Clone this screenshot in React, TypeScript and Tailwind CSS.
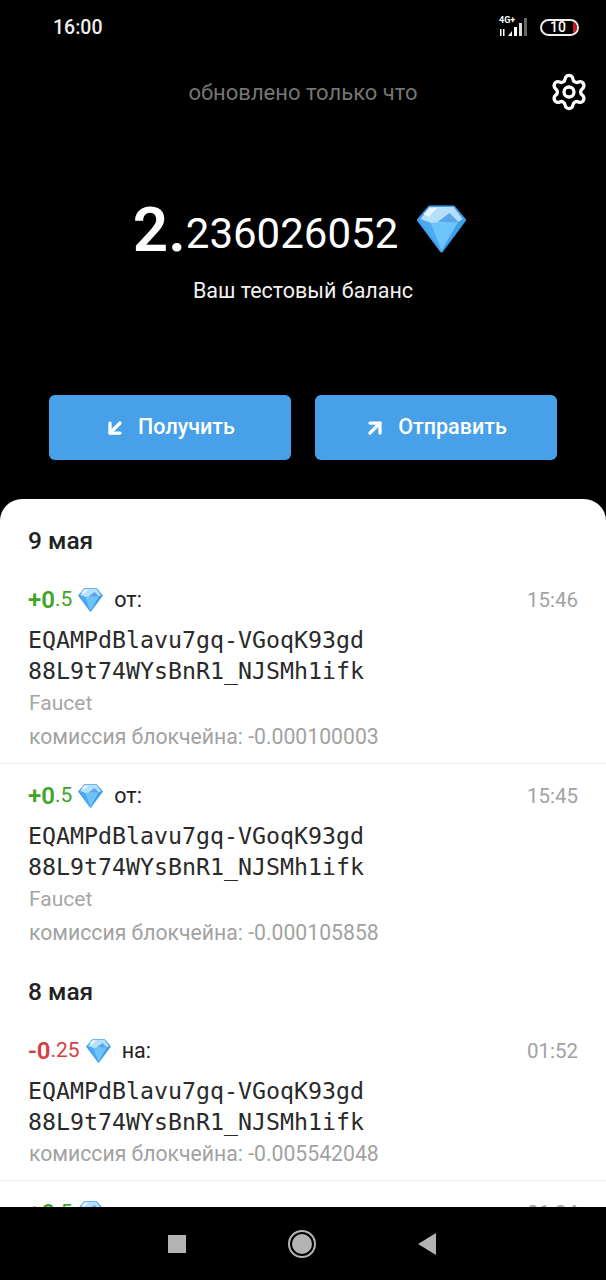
import { ArrowDownLeft, ArrowUpRight, Settings } from 'lucide-react'

const address = ['EQAMPdBlavu7gq-VGoqK93gd', '88L9t74WYsBnR1_NJSMh1ifk']

function Diamond({ className }: { className: string }) {
  return (
    <svg viewBox="0 0 50 48" className={className}>
      <polygon points="13,2 37,2 48,15 25,46 2,15" fill="#3f9ff0" stroke="#3f9ff0" strokeWidth="3" strokeLinejoin="round" />
      <polygon points="13,2 37,2 46,14 42,17 14,18 4,14" fill="#b5dffa" />
      <polygon points="14,18 42,17 25,46" fill="#6cc4fa" />
      <polygon points="3,15 14,18 25,46" fill="#4baaf0" />
      <polygon points="42,17 47,15 25,46" fill="#3f9ae8" />
      <polygon points="21,17 33,8 42,17" fill="#5aa6e4" />
      <polygon points="7,9 13,3 21,3 12,12" fill="#e6f5ff" />
    </svg>
  )
}

function Transaction({ sign, fraction, color, label, time, source, fee, divider }: {
  sign: string
  fraction: string
  color: string
  label: string
  time: string
  source?: string
  fee: string
  divider?: boolean
}) {
  return (
    <div className={divider ? 'pl-[29px] pt-[15px] border-b border-[#eeeeee]' : 'pl-[29px] pt-[15px]'}>
      <div className="flex h-[34px] items-center pr-[28px]">
        <span className={`${color} -ml-px text-[24px] font-semibold`}>{sign}0</span>
        <span className={`${color} text-[21px]`}>{fraction}</span>
        <Diamond className="ml-[6px] h-[24px] w-[25px]" />
        <span className="ml-[11px] text-[21.5px] text-[#222222]">{label}</span>
        <span className="ml-auto text-[20.5px] text-[#a2a2a2]">{time}</span>
      </div>
      <div className="-ml-px mt-[7px] font-['DejaVu_Sans_Mono',monospace] text-[23.25px] leading-[31px] text-[#2a2a2a]">
        {address.map((line) => (
          <div key={line}>{line}</div>
        ))}
      </div>
      {source && <div className="mt-[1px] h-[32px] text-[21px] leading-[32px] text-[#a6a6a6]">{source}</div>}
      {source ? (
        <div className="h-[35px] text-[21.2px] leading-[35px] text-[#a2a2a2]">{fee}</div>
      ) : (
        <div className="mt-[1px] h-[31px] text-[21.2px] leading-[31px] text-[#a2a2a2]">{fee}</div>
      )}
      <div className={source ? 'h-[9px]' : 'h-[11px]'} />
    </div>
  )
}

export default function App() {
  return (
    <div className="flex h-[1280px] w-[606px] flex-col overflow-hidden bg-black font-['Roboto',sans-serif]">
      {/* Status bar */}
      <div className="flex h-[54px] shrink-0 items-center pl-[53px] pr-[27px]">
        <span className="mt-[1px] text-[19.5px] font-medium text-[#eeeeee]">16:00</span>
        <div className="ml-auto flex items-center">
          <div className="relative h-[22px] w-[32px]">
            <span className="absolute left-0 top-[-1px] text-[9px] font-bold leading-[11px] text-white">4G+</span>
            <svg viewBox="0 0 32 22" className="h-[22px] w-[32px]">
              <rect x="1" y="13" width="1.5" height="7" fill="#fff" />
              <rect x="4" y="13" width="1.5" height="7" fill="#fff" />
              <polygon points="9,20 13,20 13,15" fill="#fff" />
              <rect x="15" y="11" width="3" height="9" fill="#fff" />
              <rect x="20" y="7" width="3" height="13" fill="#ddd" />
              <rect x="25" y="2" width="3" height="18" fill="#666" />
            </svg>
          </div>
          <div className="relative ml-[9px] flex h-[17px] w-[39px] items-center justify-center overflow-hidden rounded-full border-2 border-[#eeeeee] pr-[3px]">
            <span className="text-[14px] font-medium leading-none text-white">10</span>
            <span className="absolute right-0 top-[1px] h-[11px] w-[4px] rounded-r-full bg-[#c81818]" />
          </div>
        </div>
      </div>

      {/* Header */}
      <div className="grid h-[76px] shrink-0 grid-cols-[1fr_auto_1fr] items-center">
        <div />
        <span className="mt-[1px] text-[22px] text-[#757575]">обновлено только что</span>
        <Settings className="ml-auto mr-[17px] h-[40px] w-[40px] text-white" strokeWidth={2} />
      </div>

      {/* Balance */}
      <div className="mt-[59px] flex h-[80px] shrink-0 items-center justify-center pr-[6px] text-white">
        <span className="text-[62px] font-semibold">2.</span>
        <span className="mt-[9px] text-[42px]">236026052</span>
        <Diamond className="ml-[18px] h-[48px] w-[51px]" />
      </div>
      <div className="mt-[7px] text-center text-[21.5px] leading-[30px] text-[#f2f2f2]">Ваш тестовый баланс</div>

      {/* Actions */}
      <div className="mt-[89px] flex shrink-0 gap-[24px] px-[49px]">
        <div className="flex h-[65px] w-[242px] items-center justify-center gap-[11px] rounded-[6px] bg-[#47a0e8] pr-[2px] text-[21.5px] font-medium text-white">
          <ArrowDownLeft className="h-[24px] w-[24px]" strokeWidth={3.25} />
          Получить
        </div>
        <div className="flex h-[65px] w-[242px] items-center justify-center gap-[11px] rounded-[6px] bg-[#47a0e8] pr-[2px] text-[21.5px] font-medium text-white">
          <ArrowUpRight className="h-[24px] w-[24px]" strokeWidth={3.25} />
          Отправить
        </div>
      </div>

      {/* History */}
      <div className="mt-[39px] min-h-0 flex-1 overflow-hidden rounded-t-[22px] bg-white">
        <div className="h-[69px] pl-[28px] pt-[24px] text-[24.5px] font-medium leading-[36px] text-[#222222]">9 мая</div>
        <Transaction sign="+" fraction=".5" color="text-[#3fa52b]" label="от:" time="15:46" source="Faucet" fee="комиссия блокчейна: -0.000100003" divider />
        <Transaction sign="+" fraction=".5" color="text-[#3fa52b]" label="от:" time="15:45" source="Faucet" fee="комиссия блокчейна: -0.000105858" />
        <div className="h-[60px] pl-[28px] pt-[15px] text-[24.5px] font-medium leading-[36px] text-[#222222]">8 мая</div>
        <Transaction sign="-" fraction=".25" color="text-[#d2403f]" label="на:" time="01:52" fee="комиссия блокчейна: -0.005542048" divider />
        <Transaction sign="+" fraction=".5" color="text-[#3fa52b]" label="от:" time="01:34" fee="комиссия блокчейна: -0.000100003" />
      </div>

      {/* Navigation bar */}
      <div className="flex h-[73px] shrink-0 items-center justify-center gap-[102px] bg-black pr-[2px]">
        <div className="h-[18px] w-[18px] bg-[#b4b4b4]" />
        <div className="flex h-[28px] w-[28px] items-center justify-center rounded-full border-2 border-[#b4b4b4]">
          <div className="h-[20px] w-[20px] rounded-full bg-[#b4b4b4]" />
        </div>
        <svg viewBox="0 0 18 22" className="h-[22px] w-[18px]">
          <polygon points="18,0 18,22 0,11" fill="#b4b4b4" />
        </svg>
      </div>
    </div>
  )
}
